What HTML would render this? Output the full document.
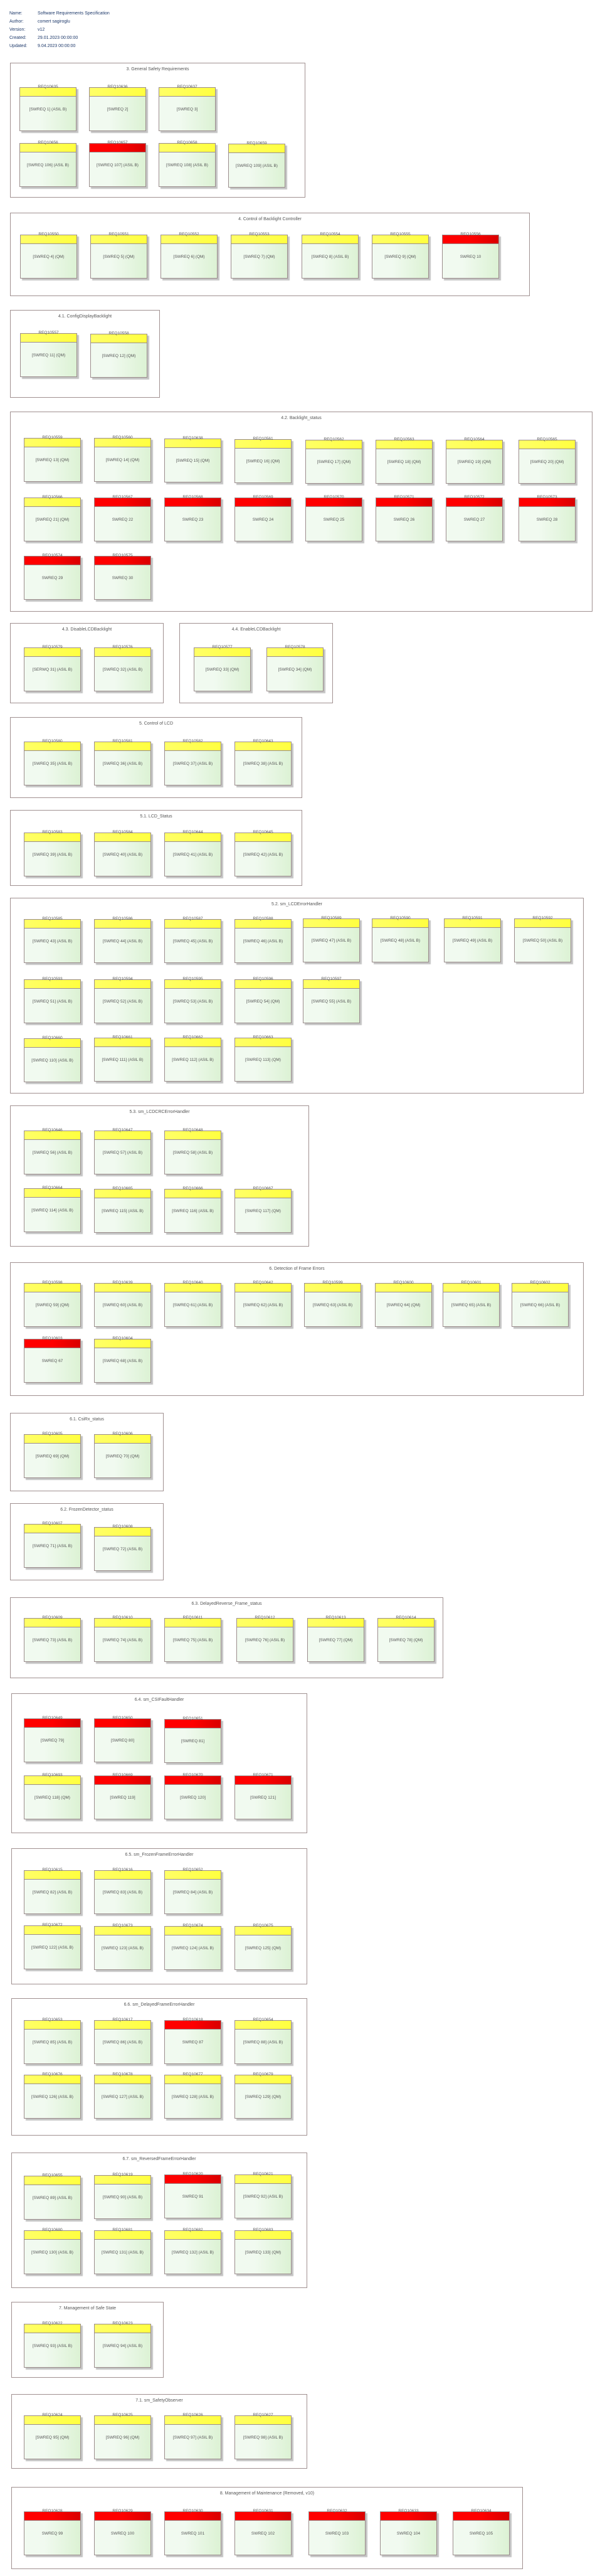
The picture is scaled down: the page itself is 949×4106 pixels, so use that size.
<!DOCTYPE html>
<html><head><meta charset="utf-8"><style>
*{margin:0;padding:0;box-sizing:border-box}
body{width:949px;height:4106px;background:#fff;position:relative;font-family:"Liberation Sans",sans-serif;overflow:hidden}
.h{position:absolute;left:15px;font-size:7px;color:#1f3a6b;line-height:13px}
.h span{display:inline-block;width:45px}
.s{position:absolute;border:1px solid #a09090;background:#fff}
.s>em{position:absolute;left:0;right:0;top:6px;text-align:center;font-style:normal;font-size:7px;color:#555}
.b{position:absolute;width:91px;height:70px;border:1px solid #9b8c8c;background:linear-gradient(90deg,#f1faf0 35%,#dcf2d4);box-shadow:3px 3px 1px #c4c4c4}
.b:before{content:"";position:absolute;left:0;right:0;top:0;height:13px;border-bottom:1px solid #9b8c8c;background:linear-gradient(90deg,#ffff66,#ffff40)}
.b.r:before{background:linear-gradient(90deg,#ff0000 50%,#d90000)}
.b i{position:absolute;left:0;right:0;top:-5px;text-align:center;font-style:normal;font-size:6.5px;color:#555}
.b p{position:absolute;left:0;right:0;top:31px;text-align:center;font-size:6.5px;color:#555;white-space:nowrap}
</style></head><body>
<div class="h" style="top:15px"><span>Name:</span>Software Requirements Specification<br><span>Author:</span>comert sagiroglu<br><span>Version:</span>v12<br><span>Created:</span>29.01.2023 00:00:00<br><span>Updated:</span>9.04.2023 00:00:00</div>

<div class="s" style="left:16px;top:100px;width:471px;height:215px"><em>3. General Safety Requirements</em></div>
<div class="b" style="left:31px;top:139px"><i>REQ10635</i><p>[SWREQ 1] (ASIL B)</p></div>
<div class="b" style="left:142px;top:139px"><i>REQ10636</i><p>[SWREQ 2]</p></div>
<div class="b" style="left:253px;top:139px"><i>REQ10637</i><p>[SWREQ 3]</p></div>
<div class="b" style="left:31px;top:228px"><i>REQ10656</i><p>[SWREQ 106] (ASIL B)</p></div>
<div class="b r" style="left:142px;top:228px"><i>REQ10657</i><p>[SWREQ 107] (ASIL B)</p></div>
<div class="b" style="left:253px;top:228px"><i>REQ10658</i><p>[SWREQ 108] (ASIL B)</p></div>
<div class="b" style="left:364px;top:229px"><i>REQ10659</i><p>[SWREQ 109] (ASIL B)</p></div>

<div class="s" style="left:16px;top:339px;width:829px;height:133px"><em>4. Control of Backlight Controller</em></div>
<div class="b" style="left:32px;top:374px"><i>REQ10550</i><p>[SWREQ 4] (QM)</p></div>
<div class="b" style="left:144px;top:374px"><i>REQ10551</i><p>[SWREQ 5] (QM)</p></div>
<div class="b" style="left:256px;top:374px"><i>REQ10552</i><p>[SWREQ 6] (QM)</p></div>
<div class="b" style="left:368px;top:374px"><i>REQ10553</i><p>[SWREQ 7] (QM)</p></div>
<div class="b" style="left:481px;top:374px"><i>REQ10554</i><p>[SWREQ 8] (ASIL B)</p></div>
<div class="b" style="left:593px;top:374px"><i>REQ10555</i><p>[SWREQ 9] (QM)</p></div>
<div class="b r" style="left:705px;top:374px"><i>REQ10556</i><p>SWREQ 10</p></div>

<div class="s" style="left:16px;top:494px;width:239px;height:140px"><em>4.1. ConfigDisplayBacklight</em></div>
<div class="b" style="left:32px;top:531px"><i>REQ10557</i><p>[SWREQ 11] (QM)</p></div>
<div class="b" style="left:144px;top:532px"><i>REQ10558</i><p>[SWREQ 12] (QM)</p></div>

<div class="s" style="left:16px;top:656px;width:929px;height:319px"><em>4.2. Backlight_status</em></div>
<div class="b" style="left:38px;top:698px"><i>REQ10559</i><p>[SWREQ 13] (QM)</p></div>
<div class="b" style="left:150px;top:698px"><i>REQ10560</i><p>[SWREQ 14] (QM)</p></div>
<div class="b" style="left:262px;top:699px"><i>REQ10638</i><p>[SWREQ 15] (QM)</p></div>
<div class="b" style="left:374px;top:700px"><i>REQ10561</i><p>[SWREQ 16] (QM)</p></div>
<div class="b" style="left:487px;top:701px"><i>REQ10562</i><p>[SWREQ 17] (QM)</p></div>
<div class="b" style="left:599px;top:701px"><i>REQ10563</i><p>[SWREQ 18] (QM)</p></div>
<div class="b" style="left:711px;top:701px"><i>REQ10564</i><p>[SWREQ 19] (QM)</p></div>
<div class="b" style="left:827px;top:701px"><i>REQ10565</i><p>[SWREQ 20] (QM)</p></div>
<div class="b" style="left:38px;top:793px"><i>REQ10566</i><p>[SWREQ 21] (QM)</p></div>
<div class="b r" style="left:150px;top:793px"><i>REQ10567</i><p>SWREQ 22</p></div>
<div class="b r" style="left:262px;top:793px"><i>REQ10568</i><p>SWREQ 23</p></div>
<div class="b r" style="left:374px;top:793px"><i>REQ10569</i><p>SWREQ 24</p></div>
<div class="b r" style="left:487px;top:793px"><i>REQ10570</i><p>SWREQ 25</p></div>
<div class="b r" style="left:599px;top:793px"><i>REQ10571</i><p>SWREQ 26</p></div>
<div class="b r" style="left:711px;top:793px"><i>REQ10572</i><p>SWREQ 27</p></div>
<div class="b r" style="left:827px;top:793px"><i>REQ10573</i><p>SWREQ 28</p></div>
<div class="b r" style="left:38px;top:886px"><i>REQ10574</i><p>SWREQ 29</p></div>
<div class="b r" style="left:150px;top:886px"><i>REQ10575</i><p>SWREQ 30</p></div>

<div class="s" style="left:16px;top:993px;width:245px;height:128px"><em>4.3. DisableLCDBacklight</em></div>
<div class="b" style="left:38px;top:1032px"><i>REQ10579</i><p>[SERWQ 31] (ASIL B)</p></div>
<div class="b" style="left:150px;top:1032px"><i>REQ10576</i><p>[SWREQ 32] (ASIL B)</p></div>
<div class="s" style="left:286px;top:993px;width:245px;height:128px"><em>4.4. EnableLCDBacklight</em></div>
<div class="b" style="left:309px;top:1032px"><i>REQ10577</i><p>[SWREQ 33] (QM)</p></div>
<div class="b" style="left:425px;top:1032px"><i>REQ10578</i><p>[SWREQ 34] (QM)</p></div>

<div class="s" style="left:16px;top:1143px;width:466px;height:129px"><em>5. Control of LCD</em></div>
<div class="b" style="left:38px;top:1182px"><i>REQ10580</i><p>[SWREQ 35] (ASIL B)</p></div>
<div class="b" style="left:150px;top:1182px"><i>REQ10581</i><p>[SWREQ 36] (ASIL B)</p></div>
<div class="b" style="left:262px;top:1182px"><i>REQ10582</i><p>[SWREQ 37] (ASIL B)</p></div>
<div class="b" style="left:374px;top:1182px"><i>REQ10643</i><p>[SWREQ 38] (ASIL B)</p></div>

<div class="s" style="left:16px;top:1291px;width:466px;height:121px"><em>5.1. LCD_Status</em></div>
<div class="b" style="left:38px;top:1327px"><i>REQ10583</i><p>[SWREQ 39] (ASIL B)</p></div>
<div class="b" style="left:150px;top:1327px"><i>REQ10584</i><p>[SWREQ 40] (ASIL B)</p></div>
<div class="b" style="left:262px;top:1327px"><i>REQ10644</i><p>[SWREQ 41] (ASIL B)</p></div>
<div class="b" style="left:374px;top:1327px"><i>REQ10645</i><p>[SWREQ 42] (ASIL B)</p></div>

<div class="s" style="left:16px;top:1431px;width:915px;height:312px"><em>5.2. sm_LCDErrorHandler</em></div>
<div class="b" style="left:38px;top:1465px"><i>REQ10585</i><p>[SWREQ 43] (ASIL B)</p></div>
<div class="b" style="left:150px;top:1465px"><i>REQ10586</i><p>[SWREQ 44] (ASIL B)</p></div>
<div class="b" style="left:262px;top:1465px"><i>REQ10587</i><p>[SWREQ 45] (ASIL B)</p></div>
<div class="b" style="left:374px;top:1465px"><i>REQ10588</i><p>[SWREQ 46] (ASIL B)</p></div>
<div class="b" style="left:483px;top:1464px"><i>REQ10589</i><p>[SWREQ 47] (ASIL B)</p></div>
<div class="b" style="left:593px;top:1464px"><i>REQ10590</i><p>[SWREQ 48] (ASIL B)</p></div>
<div class="b" style="left:708px;top:1464px"><i>REQ10591</i><p>[SWREQ 49] (ASIL B)</p></div>
<div class="b" style="left:820px;top:1464px"><i>REQ10592</i><p>[SWREQ 50] (ASIL B)</p></div>
<div class="b" style="left:38px;top:1561px"><i>REQ10593</i><p>[SWREQ 51] (ASIL B)</p></div>
<div class="b" style="left:150px;top:1561px"><i>REQ10594</i><p>[SWREQ 52] (ASIL B)</p></div>
<div class="b" style="left:262px;top:1561px"><i>REQ10595</i><p>[SWREQ 53] (ASIL B)</p></div>
<div class="b" style="left:374px;top:1561px"><i>REQ10596</i><p>[SWREQ 54] (QM)</p></div>
<div class="b" style="left:483px;top:1561px"><i>REQ10597</i><p>[SWREQ 55] (ASIL B)</p></div>
<div class="b" style="left:38px;top:1655px"><i>REQ10660</i><p>[SWREQ 110] (ASIL B)</p></div>
<div class="b" style="left:150px;top:1654px"><i>REQ10661</i><p>[SWREQ 111] (ASIL B)</p></div>
<div class="b" style="left:262px;top:1654px"><i>REQ10662</i><p>[SWREQ 112] (ASIL B)</p></div>
<div class="b" style="left:374px;top:1654px"><i>REQ10663</i><p>[SWREQ 113] (QM)</p></div>

<div class="s" style="left:16px;top:1762px;width:477px;height:225px"><em>5.3. sm_LCDCRCErrorHandler</em></div>
<div class="b" style="left:38px;top:1802px"><i>REQ10646</i><p>[SWREQ 56] (ASIL B)</p></div>
<div class="b" style="left:150px;top:1802px"><i>REQ10647</i><p>[SWREQ 57] (ASIL B)</p></div>
<div class="b" style="left:262px;top:1802px"><i>REQ10648</i><p>[SWREQ 58] (ASIL B)</p></div>
<div class="b" style="left:38px;top:1894px"><i>REQ10664</i><p>[SWREQ 114] (ASIL B)</p></div>
<div class="b" style="left:150px;top:1895px"><i>REQ10665</i><p>[SWREQ 115] (ASIL B)</p></div>
<div class="b" style="left:262px;top:1895px"><i>REQ10666</i><p>[SWREQ 116] (ASIL B)</p></div>
<div class="b" style="left:374px;top:1895px"><i>REQ10667</i><p>[SWREQ 117] (QM)</p></div>

<div class="s" style="left:16px;top:2012px;width:915px;height:213px"><em>6. Detection of Frame Errors</em></div>
<div class="b" style="left:38px;top:2045px"><i>REQ10598</i><p>[SWREQ 59] (QM)</p></div>
<div class="b" style="left:150px;top:2045px"><i>REQ10639</i><p>[SWREQ 60] (ASIL B)</p></div>
<div class="b" style="left:262px;top:2045px"><i>REQ10640</i><p>[SWREQ 61] (ASIL B)</p></div>
<div class="b" style="left:374px;top:2045px"><i>REQ10642</i><p>[SWREQ 62] (ASIL B)</p></div>
<div class="b" style="left:485px;top:2045px"><i>REQ10599</i><p>[SWREQ 63] (ASIL B)</p></div>
<div class="b" style="left:598px;top:2045px"><i>REQ10600</i><p>[SWREQ 64] (QM)</p></div>
<div class="b" style="left:706px;top:2045px"><i>REQ10601</i><p>[SWREQ 65] (ASIL B)</p></div>
<div class="b" style="left:816px;top:2045px"><i>REQ10602</i><p>[SWREQ 66] (ASIL B)</p></div>
<div class="b r" style="left:38px;top:2134px"><i>REQ10603</i><p>SWREQ 67</p></div>
<div class="b" style="left:150px;top:2134px"><i>REQ10604</i><p>[SWREQ 68] (ASIL B)</p></div>

<div class="s" style="left:16px;top:2252px;width:245px;height:125px"><em>6.1. CsiRx_status</em></div>
<div class="b" style="left:38px;top:2286px"><i>REQ10605</i><p>[SWREQ 69] (QM)</p></div>
<div class="b" style="left:150px;top:2286px"><i>REQ10606</i><p>[SWREQ 70] (QM)</p></div>

<div class="s" style="left:16px;top:2396px;width:245px;height:123px"><em>6.2. FrozenDetector_status</em></div>
<div class="b" style="left:38px;top:2429px"><i>REQ10607</i><p>[SWREQ 71] (ASIL B)</p></div>
<div class="b" style="left:150px;top:2434px"><i>REQ10608</i><p>[SWREQ 72] (ASIL B)</p></div>

<div class="s" style="left:16px;top:2546px;width:691px;height:129px"><em>6.3. DelayedReverse_Frame_status</em></div>
<div class="b" style="left:38px;top:2579px"><i>REQ10609</i><p>[SWREQ 73] (ASIL B)</p></div>
<div class="b" style="left:150px;top:2579px"><i>REQ10610</i><p>[SWREQ 74] (ASIL B)</p></div>
<div class="b" style="left:262px;top:2579px"><i>REQ10611</i><p>[SWREQ 75] (ASIL B)</p></div>
<div class="b" style="left:377px;top:2579px"><i>REQ10612</i><p>[SWREQ 76] (ASIL B)</p></div>
<div class="b" style="left:490px;top:2579px"><i>REQ10613</i><p>[SWREQ 77] (QM)</p></div>
<div class="b" style="left:602px;top:2579px"><i>REQ10614</i><p>[SWREQ 78] (QM)</p></div>

<div class="s" style="left:18px;top:2699px;width:472px;height:223px"><em>6.4. sm_CSIFaultHandler</em></div>
<div class="b r" style="left:38px;top:2739px"><i>REQ10649</i><p>[SWREQ 79]</p></div>
<div class="b r" style="left:150px;top:2739px"><i>REQ10650</i><p>[SWREQ 80]</p></div>
<div class="b r" style="left:262px;top:2740px"><i>REQ10651</i><p>[SWREQ 81]</p></div>
<div class="b" style="left:38px;top:2830px"><i>REQ10693</i><p>[SWREQ 118] (QM)</p></div>
<div class="b r" style="left:150px;top:2830px"><i>REQ10669</i><p>[SWREQ 119]</p></div>
<div class="b r" style="left:262px;top:2830px"><i>REQ10670</i><p>[SWREQ 120]</p></div>
<div class="b r" style="left:374px;top:2830px"><i>REQ10671</i><p>[SWREQ 121]</p></div>

<div class="s" style="left:18px;top:2946px;width:472px;height:217px"><em>6.5. sm_FrozenFrameErrorHandler</em></div>
<div class="b" style="left:38px;top:2981px"><i>REQ10615</i><p>[SWREQ 82] (ASIL B)</p></div>
<div class="b" style="left:150px;top:2981px"><i>REQ10616</i><p>[SWREQ 83] (ASIL B)</p></div>
<div class="b" style="left:262px;top:2981px"><i>REQ10652</i><p>[SWREQ 84] (ASIL B)</p></div>
<div class="b" style="left:38px;top:3069px"><i>REQ10672</i><p>[SWREQ 122] (ASIL B)</p></div>
<div class="b" style="left:150px;top:3070px"><i>REQ10673</i><p>[SWREQ 123] (ASIL B)</p></div>
<div class="b" style="left:262px;top:3070px"><i>REQ10674</i><p>[SWREQ 124] (ASIL B)</p></div>
<div class="b" style="left:374px;top:3070px"><i>REQ10675</i><p>[SWREQ 125] (QM)</p></div>

<div class="s" style="left:18px;top:3185px;width:472px;height:219px"><em>6.6. sm_DelayedFrameErrorHandler</em></div>
<div class="b" style="left:38px;top:3220px"><i>REQ10653</i><p>[SWREQ 85] (ASIL B)</p></div>
<div class="b" style="left:150px;top:3220px"><i>REQ10617</i><p>[SWREQ 86] (ASIL B)</p></div>
<div class="b r" style="left:262px;top:3220px"><i>REQ10618</i><p>SWREQ 87</p></div>
<div class="b" style="left:374px;top:3220px"><i>REQ10654</i><p>[SWREQ 88] (ASIL B)</p></div>
<div class="b" style="left:38px;top:3307px"><i>REQ10676</i><p>[SWREQ 126] (ASIL B)</p></div>
<div class="b" style="left:150px;top:3307px"><i>REQ10678</i><p>[SWREQ 127] (ASIL B)</p></div>
<div class="b" style="left:262px;top:3307px"><i>REQ10677</i><p>[SWREQ 128] (ASIL B)</p></div>
<div class="b" style="left:374px;top:3307px"><i>REQ10679</i><p>[SWREQ 129] (QM)</p></div>

<div class="s" style="left:18px;top:3431px;width:472px;height:216px"><em>6.7. sm_ReversedFrameErrorHandler</em></div>
<div class="b" style="left:38px;top:3468px"><i>REQ10655</i><p>[SWREQ 89] (ASIL B)</p></div>
<div class="b" style="left:150px;top:3467px"><i>REQ10619</i><p>[SWREQ 90] (ASIL B)</p></div>
<div class="b r" style="left:262px;top:3466px"><i>REQ10620</i><p>SWREQ 91</p></div>
<div class="b" style="left:374px;top:3466px"><i>REQ10621</i><p>[SWREQ 92] (ASIL B)</p></div>
<div class="b" style="left:38px;top:3555px"><i>REQ10680</i><p>[SWREQ 130] (ASIL B)</p></div>
<div class="b" style="left:150px;top:3555px"><i>REQ10681</i><p>[SWREQ 131] (ASIL B)</p></div>
<div class="b" style="left:262px;top:3555px"><i>REQ10682</i><p>[SWREQ 132] (ASIL B)</p></div>
<div class="b" style="left:374px;top:3555px"><i>REQ10683</i><p>[SWREQ 133] (QM)</p></div>

<div class="s" style="left:18px;top:3669px;width:243px;height:121px"><em>7. Management of Safe State</em></div>
<div class="b" style="left:38px;top:3704px"><i>REQ10622</i><p>[SWREQ 93] (ASIL B)</p></div>
<div class="b" style="left:150px;top:3704px"><i>REQ10623</i><p>[SWREQ 94] (ASIL B)</p></div>

<div class="s" style="left:18px;top:3816px;width:472px;height:119px"><em>7.1. sm_SafetyObserver</em></div>
<div class="b" style="left:38px;top:3850px"><i>REQ10624</i><p>[SWREQ 95] (QM)</p></div>
<div class="b" style="left:150px;top:3850px"><i>REQ10625</i><p>[SWREQ 96] (QM)</p></div>
<div class="b" style="left:262px;top:3850px"><i>REQ10626</i><p>[SWREQ 97] (ASIL B)</p></div>
<div class="b" style="left:374px;top:3850px"><i>REQ10627</i><p>[SWREQ 98] (ASIL B)</p></div>

<div class="s" style="left:18px;top:3964px;width:816px;height:131px"><em>8. Management of Maintenance (Removed, v10)</em></div>
<div class="b r" style="left:38px;top:4003px"><i>REQ10628</i><p>SWREQ 99</p></div>
<div class="b r" style="left:150px;top:4003px"><i>REQ10629</i><p>SWREQ 100</p></div>
<div class="b r" style="left:262px;top:4003px"><i>REQ10630</i><p>SWREQ 101</p></div>
<div class="b r" style="left:374px;top:4003px"><i>REQ10631</i><p>SWREQ 102</p></div>
<div class="b r" style="left:492px;top:4003px"><i>REQ10632</i><p>SWREQ 103</p></div>
<div class="b r" style="left:606px;top:4003px"><i>REQ10633</i><p>SWREQ 104</p></div>
<div class="b r" style="left:722px;top:4003px"><i>REQ10634</i><p>SWREQ 105</p></div>
</body></html>
